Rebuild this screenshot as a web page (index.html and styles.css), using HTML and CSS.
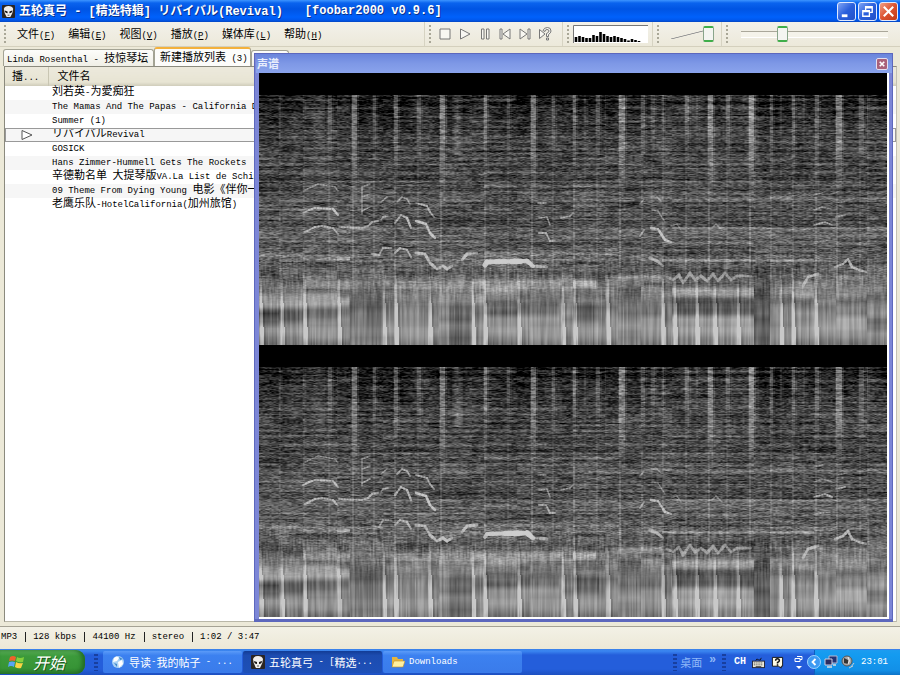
FILE: index.html
```html
<!DOCTYPE html>
<html lang="zh-CN">
<head>
<meta charset="utf-8">
<title>foobar2000</title>
<link rel="stylesheet" href="styles.css">
</head>
<body>
<svg width="0" height="0" class="defs" aria-hidden="true">
  <symbol id="alien" viewBox="0 0 14 14">
    <rect width="14" height="14" rx="1" fill="#2b2522"/>
    <path d="M2 4Q3 1 7 1T12 4Q12 8 9 13H5Q2 8 2 4Z" fill="#f1efec"/>
    <path d="M3 6L6 7V9Q3 9 3 6ZM11 6L8 7V9Q11 9 11 6Z" fill="#1b1716"/>
    <path d="M6 11H8" stroke="#555"/>
  </symbol>
</svg>
<header class="titlebar">
  <svg class="app" viewBox="0 0 14 14"><use href="#alien"/></svg>
  <h1><span class="cj">五轮真弓</span> - [<span class="cj">精选特辑</span>] <span class="jp">リバイバル</span>(Revival)</h1>
  <span class="ver">[foobar2000 v0.9.6]</span>
  <div class="winbtns">
    <button aria-label="最小化"><svg viewBox="0 0 18 18"><path d="M4 12H10V15H4Z" fill="#fff"/></svg></button>
    <button aria-label="还原"><svg viewBox="0 0 18 18"><path d="M7 8V4H14V10H11M7 5H14M4 8H11V14H4ZM4 9H11" fill="none" stroke="#fff" stroke-width="1.4"/></svg></button>
    <button class="x" aria-label="关闭"><svg viewBox="0 0 18 18"><path d="M4 4L14 14M14 4L4 14" stroke="#fff" stroke-width="2.2"/></svg></button>
  </div>
</header>
<div class="toolbar">
  <nav class="menu">
    <i class="grip"></i>
    <button><span class="cj">文件</span>(<u>F</u>)</button>
    <button><span class="cj">编辑</span>(<u>E</u>)</button>
    <button><span class="cj">视图</span>(<u>V</u>)</button>
    <button><span class="cj">播放</span>(<u>P</u>)</button>
    <button><span class="cj">媒体库</span>(<u>L</u>)</button>
    <button><span class="cj">帮助</span>(<u>H</u>)</button>
  </nav>
  <div class="band play">
    <i class="grip"></i>
    <button aria-label="停止"><svg viewBox="0 0 14 14"><path d="M2 2H12V12H2Z"/></svg></button>
    <button aria-label="播放"><svg viewBox="0 0 14 14"><path d="M2.500 2L12 7L2.500 12Z"/></svg></button>
    <button aria-label="暂停"><svg viewBox="0 0 14 14"><path d="M3.500 2H6V12H3.500ZM8.500 2H11V12H8.500Z"/></svg></button>
    <button aria-label="上一首"><svg viewBox="0 0 14 14"><path d="M2 2H4V12H2ZM12 2V12L5 7Z"/></svg></button>
    <button aria-label="下一首"><svg viewBox="0 0 14 14"><path d="M12 2H10V12H12ZM2 2V12L9 7Z"/></svg></button>
    <button aria-label="随机"><svg viewBox="0 0 14 14"><path d="M1.500 2.500V11.500L7 7ZM5 3.500Q6 .500 9.500 .500T13 4Q13 6 10.500 7.500V9.500H8.500V6.500Q11 5.500 11 4T9 2.500T7 4.500ZM8.500 11H10.500V13H8.500Z"/></svg></button>
  </div>
  <div class="band vis">
    <i class="grip"></i>
    <svg viewBox="0 0 75 18"><rect width="75" height="18" fill="#fff"/><path d="M.500 18V.500H75" fill="none" stroke="#777"/>
    <path d="M3 17v-5M6.500 17v-6M10 17v-5M13.500 17v-4M17 17v-4M20.500 17v-7M24 17v-6M27.500 17v-10M31 17v-8M34.500 17v-6M38 17v-5M41.500 17v-6M45 17v-5M48.500 17v-4M52 17v-3M55.500 17v-1.500M59 17v-3M62.500 17v-2M66 17v-1" stroke="#000" stroke-width="2.600"/></svg>
  </div>
  <div class="band volume">
    <i class="grip"></i>
    <input type="range" aria-label="音量" min="0" max="100" value="96">
  </div>
  <div class="band seek">
    <i class="grip"></i>
    <input type="range" aria-label="播放进度" min="0" max="227" value="60">
  </div>
</div>
<main>
  <div class="tabs">
    <button class="tab">Linda Rosenthal - <span class="cj">技惊琴坛</span></button>
    <button class="tab on"><span class="cj">新建播放列表</span> (3)</button>
    <button class="tab rest" aria-label="播放列表"></button>
  </div>
  <div class="list">
    <table>
      <thead><tr><th class="st"><span class="cj">播</span>...</th><th><span class="cj">文件名</span></th></tr></thead>
      <tbody>
        <tr><td></td><td><span class="cj">刘若英</span>-<span class="cj">为愛痴狂</span></td></tr>
        <tr><td></td><td>The Mamas And The Papas - California Dreamin</td></tr>
        <tr><td></td><td>Summer (1)</td></tr>
        <tr class="now"><td><svg viewBox="0 0 12 12"><path d="M1 1.500L11 6L1 10.500Z" fill="#fff" stroke="#555"/></svg></td><td><span class="jp">リバイバル</span>Revival</td></tr>
        <tr><td></td><td>GOSICK</td></tr>
        <tr><td></td><td>Hans Zimmer-Hummell Gets The Rockets</td></tr>
        <tr><td></td><td><span class="cj">辛德勒名单</span> <span class="cj">大提琴版</span>VA.La List de Schindler</td></tr>
        <tr><td></td><td>09 Theme From Dying Young <span class="cj">电影《伴你一生》</span></td></tr>
        <tr><td></td><td><span class="cj">老鹰乐队</span>-HotelCalifornia(<span class="cj">加州旅馆</span>)</td></tr>
      </tbody>
    </table>
  </div>
  <section class="float">
    <header><h2 class="cj">声谱</h2><button aria-label="关闭"><svg viewBox="0 0 11 11"><path d="M3 3L8 8M8 3L3 8" stroke="#fff" stroke-width="1.800"/></svg></button></header>
    <div class="spectra"><canvas width="628" height="272"></canvas><canvas width="628" height="272"></canvas></div>
  </section>
</main>
<footer class="status"><span>MP3</span><span>128 kbps</span><span>44100 Hz</span><span>stereo</span><span>1:02 / 3:47</span></footer>
<nav class="taskbar">
  <button class="start"><svg viewBox="0 0 18 18"><path d="M2 4Q5 2 8 4L7 8Q4 7 1 8Z" fill="#f0622c"/><path d="M9 4Q12 6 16 4L15 9Q11 10 8 8Z" fill="#86d03c"/><path d="M1 9Q4 8 7 9L6 14Q3 12 0 14Z" fill="#58a5f5"/><path d="M8 9Q11 11 15 10L13 15Q10 16 7 14Z" fill="#fbd443"/></svg><span>开始</span></button>
  <i class="dots"></i>
  <div class="tasks">
    <button><svg viewBox="0 0 14 14"><circle cx="7" cy="7" r="6" fill="#a9d2f5"/><path d="M3 3Q6 0 8 3L6 6L2 7ZM7 7L11 5L12 9L8 13Z" fill="#fff"/><path d="M8 2L12 4L9 5ZM3 8L6 9L6 12Z" fill="#4187c9"/></svg><span class="cj">导读</span>-<span class="cj">我的帖子</span> - ...</button>
    <button class="on"><svg viewBox="0 0 14 14"><use href="#alien"/></svg><span class="cj">五轮真弓</span> - [<span class="cj">精选</span>...</button>
    <button><svg viewBox="0 0 14 14"><path d="M1 2H6L7 4H12V12H1Z" fill="#e5b53e"/><path d="M1 12L3 6H14L12 12Z" fill="#fff0a0" stroke="#c3912a" stroke-width=".600"/></svg>Downloads</button>
  </div>
  <i class="dots"></i>
  <span class="desk"><span class="cj">桌面</span><sup>»</sup></span>
  <i class="dots"></i>
  <div class="lang">
    <b>CH</b>
    <svg viewBox="0 0 14 14"><path d="M4 5Q5 2 7 4T10 2" fill="none" stroke="#112"/><rect x=".500" y="5.500" width="13" height="7" fill="#ece9d8" stroke="#223"/><path d="M2 7.500H12M2 9.500H12" stroke="#333" stroke-dasharray="1 1"/><path d="M4 11.500H10" stroke="#333"/></svg>
    <svg viewBox="0 0 14 14"><path d="M1.500 1.500H12.500V11H11V13L8 11H1.500Z" fill="#fffbe6" stroke="#111"/><path d="M5 5Q5 3 7 3T9 5Q9 6 7 7V8M7 9V10.500" fill="none" stroke="#111" stroke-width="1.600"/></svg>
    <svg viewBox="0 0 10 16"><path d="M3 2.500H8V5.500H6M1 4.500H6V7.500H1Z" fill="none" stroke="#fff"/><path d="M2 12H8L5 15Z" fill="#fff"/></svg>
  </div>
  <div class="tray">
    <button aria-label="隐藏图标"><svg viewBox="0 0 14 14"><circle cx="7" cy="7" r="6.500" fill="#3d9af3" stroke="#9bd0ff"/><path d="M8.500 4L5.500 7L8.500 10" fill="none" stroke="#fff" stroke-width="1.800"/></svg></button>
    <svg viewBox="0 0 14 14"><path d="M5 1H13V8H5Z" fill="#223374" stroke="#b6b6cf"/><path d="M1 4H8V10H1Z" fill="#2a2c60" stroke="#cfcfe0"/><path d="M3 12H8M9 10H12" stroke="#ddd" stroke-width="1.500"/></svg>
    <svg viewBox="0 0 14 14"><circle cx="6" cy="6" r="5" fill="#aaa" stroke="#555"/><path d="M3 3L7 5V9L3 8Z" fill="#333"/><path d="M7 2Q10 6 7 9" fill="none" stroke="#eee"/><path d="M10 12L13 8M8 13L12 11" stroke="#ccc"/></svg>
    <time>23:01</time>
  </div>
</nav>
<script src="spectrogram.js"></script>
</body>
</html>
```
FILE: styles.css
```css
* { box-sizing: border-box; }
body {
  margin: 0;
  height: 100vh;
  display: flex;
  flex-direction: column;
  overflow: hidden;
  background: #ece9d8;
  color: #000;
  font: 9px/14px "Liberation Mono", "Noto Sans CJK SC", monospace;
}
button { font: inherit; color: inherit; background: none; border: 0; padding: 0; white-space: pre; }
svg { display: block; flex: none; }
.defs { position: absolute; }
.cj { font: 11px/14px "Noto Sans CJK SC", sans-serif; }
.jp { font: 11px/14px "Noto Sans CJK JP", sans-serif; }

.titlebar {
  display: flex;
  align-items: center;
  flex: none;
  height: 22px;
  padding: 0 2px;
  color: #fff;
  background: linear-gradient(#3d95ff 0, #0a63ee 3px, #0054e3 9px, #0061fb 17px, #0058ee 20px, #0646c0);
}
.titlebar .app { width: 13px; height: 13px; margin-right: 4px; }
.titlebar h1, .ver { margin: 0; font-size: 12px; line-height: 20px; font-weight: bold; white-space: pre; text-shadow: 1px 1px #0a318c; }
.titlebar .cj, .titlebar .jp { font-size: 12px; line-height: 20px; font-weight: bold; }
.ver { margin-left: 22px; }
.winbtns { display: flex; gap: 2px; margin-left: auto; }
.winbtns button { width: 19px; height: 19px; border: 1px solid #dfe9ff; border-radius: 3px; background: linear-gradient(135deg, #7fa4f5, #2a5fdc 50%, #2250c8); }
.winbtns .x { background: linear-gradient(135deg, #f0a087, #dc5331 50%, #c03a18); }

.toolbar { display: flex; align-items: center; flex: none; height: 25px; border-bottom: 1px solid #d4d0bd; background: linear-gradient(#f3f1ea, #ece9da); }
.grip { flex: none; width: 2px; height: 19px; background: repeating-linear-gradient(#a9a797 0 2px, transparent 2px 4px); }
.menu { display: flex; align-items: center; gap: 13px; width: 424px; padding-left: 4px; }
.menu .grip { margin-right: -2px; }
.band { display: flex; align-items: center; height: 24px; padding-left: 4px; border-left: 1px solid #d6d3c2; }
.play { width: 138px; }
.play .grip { margin-right: 7px; }
.play button { width: 20px; }
.play svg { width: 14px; height: 14px; fill: #f8f7f2; stroke: #777; }
.vis { width: 90px; gap: 4px; }
.vis svg { width: 75px; height: 18px; }
.volume { width: 69px; gap: 12px; }
.seek { flex: 1; gap: 13px; padding-right: 12px; }
input[type=range] { appearance: none; margin: 0; background: none; width: 44px; height: 18px; }
.volume input { background: linear-gradient(to bottom right, transparent 46%, #999 49%, #999 51%, transparent 54%) 0 4px / 40px 10px no-repeat; }
.seek input { width: 100%; background: linear-gradient(#aaa79a 0 1px, #f5f3ea 1px 6px, #fff 6px) 0 6px / 100% 7px no-repeat; }
input::-webkit-slider-thumb { appearance: none; width: 11px; height: 16px; border: 1px solid #8aa58b; border-top: 2px solid #3fae4a; border-bottom: 2px solid #3fae4a; border-radius: 2px; background: #f4f5f1; }

main { position: relative; flex: 1; min-height: 0; display: flex; flex-direction: column; padding: 0 3px 4px; }
.tabs { display: flex; align-items: flex-end; flex: none; height: 19px; }
.tab { height: 17px; padding: 0 3px; border: 1px solid #a3a394; border-bottom: 0; border-radius: 3px 3px 0 0; background: linear-gradient(#fdfdfb, #f0efe6); width: 151px; text-align: left; overflow: hidden; }
.tab.on { height: 19px; width: 97px; padding: 0 5px 2px; border-top: 2px solid #f3b13c; background: #fcfcfa; }
.tab.rest { width: 38px; height: 16px; }
.list { flex: 1; min-height: 0; margin-left: 1px; overflow: hidden; background: #fff; border: 1px solid #8b8a7e; border-right-color: #c4c2b4; border-bottom-color: #b9b7a8; }
table { width: 100%; border-collapse: collapse; table-layout: fixed; }
th { height: 19px; padding: 0 7px; text-align: left; font-weight: normal; background: linear-gradient(#ece9dc, #e7e4d3 80%, #cfccba); }
th + th { padding-left: 9px; }
th.st { width: 43px; border-right: 1px solid #c9c6b3; }
td { height: 14px; padding: 0; line-height: 14px; white-space: pre; }
td + td { padding-left: 4px; }
td .cj, td .jp { line-height: 0; }
td svg { width: 12px; height: 12px; margin-left: 16px; }
tbody tr:nth-child(even) { background: #f6f6f6; }
.now { outline: 1px solid #999; outline-offset: -1px; }

.float { position: absolute; left: 254px; right: 7px; top: 6px; bottom: 4px; display: flex; flex-direction: column; background: #7c86d6; border: solid #5d68bd; border-width: 1px 1px 3px; padding: 0 3px 0 4px; }
.float header { display: flex; align-items: center; justify-content: space-between; flex: none; height: 19px; margin: 0 -3px; padding: 0 4px 0 1px; background: linear-gradient(#6a85dc, #7e98e6 50%, #8aa3ec); }
.float h2 { margin: 0; color: #e9eefc; font-weight: bold; line-height: 18px; align-self: flex-start; }
.float header button { width: 12px; height: 12px; border: 1px solid #e4dff0; border-radius: 2px; background: #a9617a; }
.spectra { flex: 1; min-height: 0; display: flex; flex-direction: column; background: #000; border: solid #fff; border-width: 0 2px 2px 0; }
canvas { display: block; width: 100%; flex: 1; min-height: 0; }

.status { display: flex; align-items: center; flex: none; height: 23px; padding: 0 1px 2px; border-top: 1px solid #a5a294; background: linear-gradient(#f3f1e6, #ece8d7); }
.status span + span { margin-left: 8px; padding-left: 7px; border-left: 1px solid #222; line-height: 10px; }

.taskbar { display: flex; align-items: center; flex: none; height: 26px; color: #fff; background: linear-gradient(#3a80e8 0, #3b86f1 2px, #245edb 6px, #245edb 20px, #1d4fc0); }
.start { display: flex; align-items: center; gap: 7px; width: 85px; height: 24px; padding-left: 8px; border-radius: 0 9px 9px 0; background: linear-gradient(#5fb25c, #3c9a3b 25%, #379436 75%, #2a7a2b); box-shadow: inset -3px 0 4px #226b25; }
.start svg { width: 18px; height: 18px; }
.start span { font: italic 16px/20px "Noto Sans CJK SC", sans-serif; text-shadow: 1px 1px #1d5a20; }
.dots { flex: none; width: 4px; height: 17px; margin: 0 7px 0 9px; background: repeating-linear-gradient(#183f9f 0 2px, transparent 2px 4px); }
.start + .dots { margin-right: 5px; }
.tasks { display: flex; flex: 1; gap: 1px; height: 22px; }
.tasks button { display: flex; align-items: center; width: 139px; padding: 0 8px; border-radius: 2px; background: linear-gradient(#5b9bf8, #3c81f0 20%, #3a7bea); }
.tasks button.on { background: linear-gradient(#123c96, #1c4cb0 20%, #1e50b8); }
.tasks svg { width: 14px; height: 14px; margin-right: 4px; }
.tasks + .dots { margin-right: 3px; }
.desk { display: flex; color: #8fb8f8; }
.desk sup { font: bold 12px/8px "Liberation Sans", sans-serif; margin-left: 7px; }
.desk + .dots { margin: 0 8px 0 6px; }
.lang { display: flex; align-items: center; gap: 6px; margin-right: 10px; }
.lang b { font-size: 10px; }
.lang svg { width: 13px; height: 13px; }
.lang svg:last-child { width: 10px; height: 16px; margin-left: 4px; }
.tray { display: flex; align-items: center; gap: 3px; height: 25px; padding-right: 12px; background: linear-gradient(#1b9cf0, #149bf0 20%, #1290e8 80%, #0d74c8); border-left: 1px solid #0f5fbf; }
.tray svg { width: 14px; height: 14px; }
.tray button { margin-left: -8px; }
.tray time { margin-left: 3px; }
```
FILE: spectrogram.js
```js
// Beats heard across the whole range: [x, strength, width]
const beats = [[20,.3,2],[44,.35,1],[69,.6,4],[78,.2,1],[93,1,5],[114,.6,3],[135,.8,4],[158,.55,4],[181,1,5],[225,.8,3],[248,.5,3],[272,1,5],[293,.55,3],[314,.8,3],[325,.3,2],[337,.6,4],[346,.3,1],[360,1,6],[382,.6,4],[392,.4,4],[403,.5,2],[426,.6,4],[437,.3,2],[449,1,5],[467,.6,4],[490,1,5],[511,.7,3],[521,.35,2],[533,.7,3],[544,.3,2],[556,.7,4],[577,1,6],[600,.6,5],[608,.4,1]];
const bass = [1,22,45,79,124,136,170,213,225,259,303,315,348,403,415,437,455,478,521,533,556];
const edges = [0,20,44,78,91,124,135,170,180,213,225,258,271,303,314,346,359,382,403,413,495,511,533,555,577,608,640];
// Bright or dark plateaus: [x0, x1, y, half height, gain]
const bands = [[0,90,227,6,35],[0,44,181,2,22],[44,91,185,2,40],[44,124,212,4,18],[20,134,244,14,6],[135,180,190,3,20],[135,225,212,5,35],[135,225,225,5,20],[225,360,180,1,40],[225,314,212,5,35],[225,303,250,14,10],[225,300,235,6,-28],[314,337,210,4,50],[314,340,238,8,-25],[359,403,204,3,25],[403,555,187,1,40],[403,495,180,3,-26],[403,555,196,2,-14],[413,495,219,4,42],[413,495,232,7,-30],[413,495,252,9,20],[495,511,245,35,-40],[533,608,218,6,20],[533,608,247,12,18],[608,628,236,6,30],[608,628,252,5,-30],[91,124,240,24,-24],[190,213,250,25,-35],[0,20,244,7,-40],[20,44,242,6,-30],[44,78,240,6,-25],[0,90,136,1,14],[80,135,153,1,30],[225,360,113,1,18],[403,628,125,1,22],[403,628,155,1,26],[403,628,170,1,28],[0,225,168,1,22]];
const tunes = [
 [2,.75,44,140,50,137,56,135,74,136,79,142],[2,.6,46,159,56,154,63,153,74,155,79,161],[1.5,.4,46,117,59,111,76,114,79,118],
 [1.8,.55,80,154,103,155,109,153,113,149,119,148],[1.8,.6,122,147,124,144,129,143],[2.2,.65,136,150,142,142,148,145,152,155],
 [2.5,.8,157,148,167,151,171,160,176,165],[1.6,.55,138,129,143,124,148,126,151,131],[2,.6,157,130,168,133,171,139,175,144],
 [2,.5,113,181,120,182,124,175,132,175],[2,.6,136,180,141,175,148,177,152,184],[3,.65,157,180,166,181,171,190,178,196,184,193,188,196,193,193],
 [3,.65,203,187,208,181,218,180],[5,.9,226,192,228,189,268,188,274,193],[3,.55,272,193,288,194],
 [1.5,.4,103,141,103,114,111,111],[1.5,.5,103,124,111,121],[1.5,.6,103,138,111,134],[1.5,.5,122,129,128,124],
 [1.5,.6,279,130,287,130],[1.5,.5,280,145,288,144,291,152],[2,.6,280,160,287,160,291,168,296,168],[1.8,.6,302,145,311,143,314,140],
 [1.8,.5,381,131,385,126],[1.5,.5,392,124,398,124,402,128],[2,.6,381,163,385,157],[2.5,.75,392,155,399,156,406,167,412,169],
 [3,.5,391,185,398,188,404,193],[1.5,.4,393,137,399,138,406,149],[1.5,.4,412,153,418,151,422,157],[1.5,.4,453,155,457,151,463,157],
 [3,.4,408,204,414,207,420,202,424,210,431,200,436,207,442,203,448,208,454,201,459,208,466,200,472,207,478,203,492,203],
 [3,.6,544,213,549,204,559,201],[2.5,.6,576,194,584,191,589,186,593,194,600,197,607,199],
 [1.8,.6,555,152,566,149,573,152],[1.8,.6,577,144,586,142],[1.5,.4,555,169,571,167],[1.5,.4,555,137,563,134,572,136],[1.5,.35,577,130,588,128],[1.4,.3,555,122,566,119]
];

function hash(x, y, s) {
  let h = Math.imul(x, 374761393) ^ Math.imul(y, 668265263) ^ Math.imul(s, 974634777);
  h = Math.imul(h ^ (h >>> 13), 1274126177);
  return ((h ^ (h >>> 16)) >>> 0) / 4294967296;
}
function noise(x, y, s) {
  const xi = Math.floor(x), yi = Math.floor(y), u = x - xi, v = y - yi;
  const a = hash(xi, yi, s), b = hash(xi + 1, yi, s), c = hash(xi, yi + 1, s), d = hash(xi + 1, yi + 1, s);
  return (a + (b - a) * u) * (1 - v) + (c + (d - c) * u) * v - .5;
}
function ramp(y, from, to) {
  return Math.min(1, Math.max(0, (y - from) / (to - from)));
}
function level(y) {
  const k = [[22,22],[45,50],[80,66],[110,80],[150,88],[185,100],[215,114],[240,122],[255,146],[262,140],[272,116]];
  for (let i = 1; i < k.length; i++) if (y <= k[i][0]) {
    return k[i-1][1] + ramp(y, k[i-1][0], k[i][0]) * (k[i][1] - k[i-1][1]);
  }
  return 116;
}
function draw(canvas, seed) {
  const w = canvas.width, h = canvas.height, ctx = canvas.getContext('2d');
  const img = ctx.createImageData(w, h);
  for (let x = 0; x < w; x++) {
    let seg = 0;
    while (edges[seg + 1] <= x) seg++;
    for (let y = 0; y < h; y++) {
      let v = 0;
      if (y >= 22) {
        v = level(y);
        const low = ramp(y, 185, 235), top = 1 - ramp(y, 22, 132);
        v += noise(x / 2.2, y, seed) * 62 * (1 - low) + noise(x / 5, y / 1.3, seed + 1) * 42 * (1 - low);
        // Deep notes smear downwards: stripes of growing length, crossfaded
        v += noise(x / 1.5, y / 7, seed + 2) * 50 * ramp(y, 165, 200) * (1 - ramp(y, 215, 245));
        v += noise(x / 1.3, y / 34, seed + 3) * 50 * ramp(y, 205, 240);
        v += noise(seg * 7, y / 1.4, 9) * 40 * (1 - low);
        v += noise(seg * 7, y / 6, 10) * 44 * ramp(y, 175, 205) * (1 - .5 * ramp(y, 225, 255));
        v += noise(3, y / 1.5, 12) * 46 * (1 - low);
        v += noise(x / 12, y / 40, 15) * 34 * (top + .25);
        if (x > 44 && x < 66 || x > 403 && x < 500) v += 16 * top;
        for (const b of beats) {
          const d = x - b[0];
          if (d > -2 && d < b[2] + 2) {
            const body = d >= 0 && d < b[2] ? 1 : .3;
            const line = d >= 0 && d < 2 ? .32 : 0;
            const fade = 1 - ramp(y, 40, 60 + 75 * b[1]);
            v += b[1] * 84 * Math.max(body * fade, line * (1 - low * .6));
          }
        }
        for (const b of bass) {
          const d = x - b, width = 1 + Math.max(0, (y - 205) / 24);
          if (d >= -1 && d < width) v += 60 * ramp(y, 190, 240) * (d < 0 ? .5 : 1);
          else if (d >= width && d < width + 2) v -= 14 * low;
        }
        for (const b of bands) if (x >= b[0] && x < b[1]) {
          const d = Math.abs(y - b[2]) / b[3];
          if (d < 1.6) v += b[4] * Math.min(1, 1.6 - d);
        }
        if (x > 192 && x < 204 && y < 82) v += 42 * (1 - Math.abs(x - 198) / 7);
      }
      v = Math.max(0, Math.min(200, v));
      const i = (y * w + x) * 4;
      img.data[i] = img.data[i + 1] = img.data[i + 2] = v;
      img.data[i + 3] = 255;
    }
  }
  ctx.putImageData(img, 0, 0);
  ctx.lineCap = 'round';
  for (const t of tunes) {
    for (let i = 2; i + 3 < t.length; i += 2) {
      const dx = t[i + 2] - t[i], dy = t[i + 3] - t[i + 1];
      const n = Math.max(1, Math.round(Math.hypot(dx, dy) / 3));
      for (let k = 0; k < n; k++) {
        const r = hash(i, k, Math.round(t[2] + t[3]) + seed);
        ctx.lineWidth = t[0] * (.75 + r * .4);
        ctx.strokeStyle = 'rgba(205,205,205,' + t[1] * (.8 + r * .3) + ')';
        ctx.beginPath();
        ctx.moveTo(t[i] + dx * k / n, t[i + 1] + dy * k / n);
        ctx.lineTo(t[i] + dx * (k + 1) / n, t[i + 1] + dy * (k + 1) / n);
        ctx.stroke();
      }
    }
  }
}
document.querySelectorAll('canvas').forEach((c, i) => draw(c, 21 + i * 10));
```
